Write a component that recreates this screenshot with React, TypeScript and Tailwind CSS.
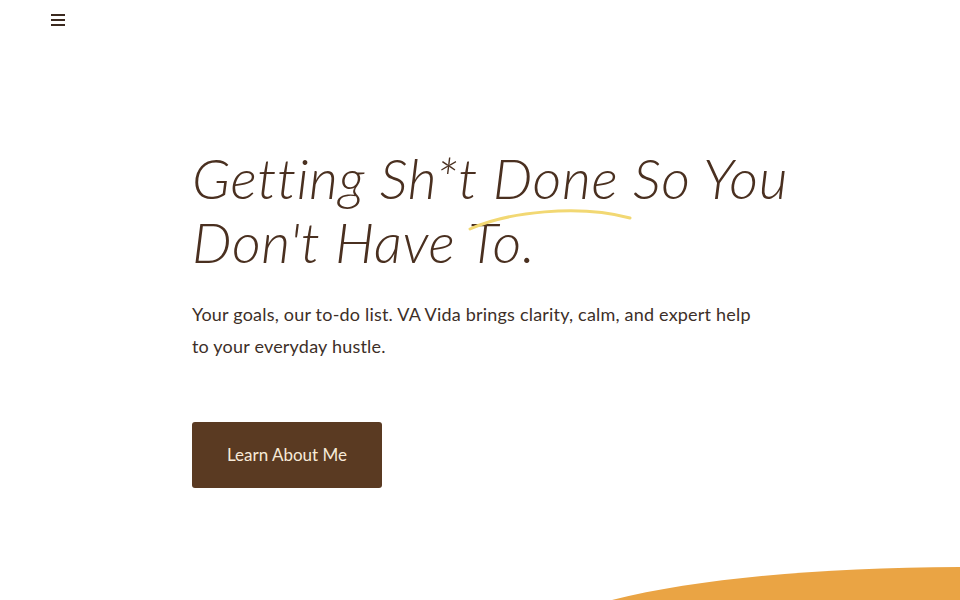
import React from "react";

export default function App() {
  return (
    <div className="relative w-[960px] h-[600px] overflow-hidden bg-white" style={{ fontFamily: "Lato, 'Liberation Sans', sans-serif" }}>
      <header className="h-[40px] flex items-center pl-[51px]">
        <button aria-label="menu" className="flex flex-col gap-[3px] w-[14px]">
          <span className="block h-[2px] w-[14px] bg-[#3b2a20]" />
          <span className="block h-[2px] w-[14px] bg-[#3b2a20]" />
          <span className="block h-[2px] w-[14px] bg-[#3b2a20]" />
        </button>
      </header>
      <main className="pl-[192px] pt-[106px]">
        <div className="relative w-[640px]">
          <h1 className="text-[56px] leading-[64px] italic font-light text-[#4a3020] tracking-[0.6px]" style={{ fontFamily: "Lato, 'Open Sans', sans-serif" }}>
            Getting Sh*t Done So You Don't Have To.
          </h1>
          <svg className="absolute left-[276px] top-[56px]" width="170" height="30" viewBox="0 0 170 30" fill="none">
            <path d="M2 27 C 40 10, 110 2, 162 16" stroke="#f2d873" strokeWidth="3" strokeLinecap="round" />
          </svg>
        </div>
        <p className="mt-[24px] text-[18px] leading-[32px] text-[#3d2f28] w-[570px] tracking-[0.2px]">
          Your goals, our to-do list. VA Vida brings clarity, calm, and expert help to your everyday hustle.
        </p>
        <button className="mt-[60px] w-[190px] h-[66px] rounded-[3px] bg-[#5a3a22] text-[#f7ead8] text-[17px]">
          Learn About Me
        </button>
      </main>
      <svg className="absolute left-0 bottom-0" width="960" height="40" viewBox="0 0 960 40" preserveAspectRatio="none">
        <path d="M612 40 C 700 18, 820 8, 960 7 L960 40 Z" fill="#eaa444" />
      </svg>
    </div>
  );
}
